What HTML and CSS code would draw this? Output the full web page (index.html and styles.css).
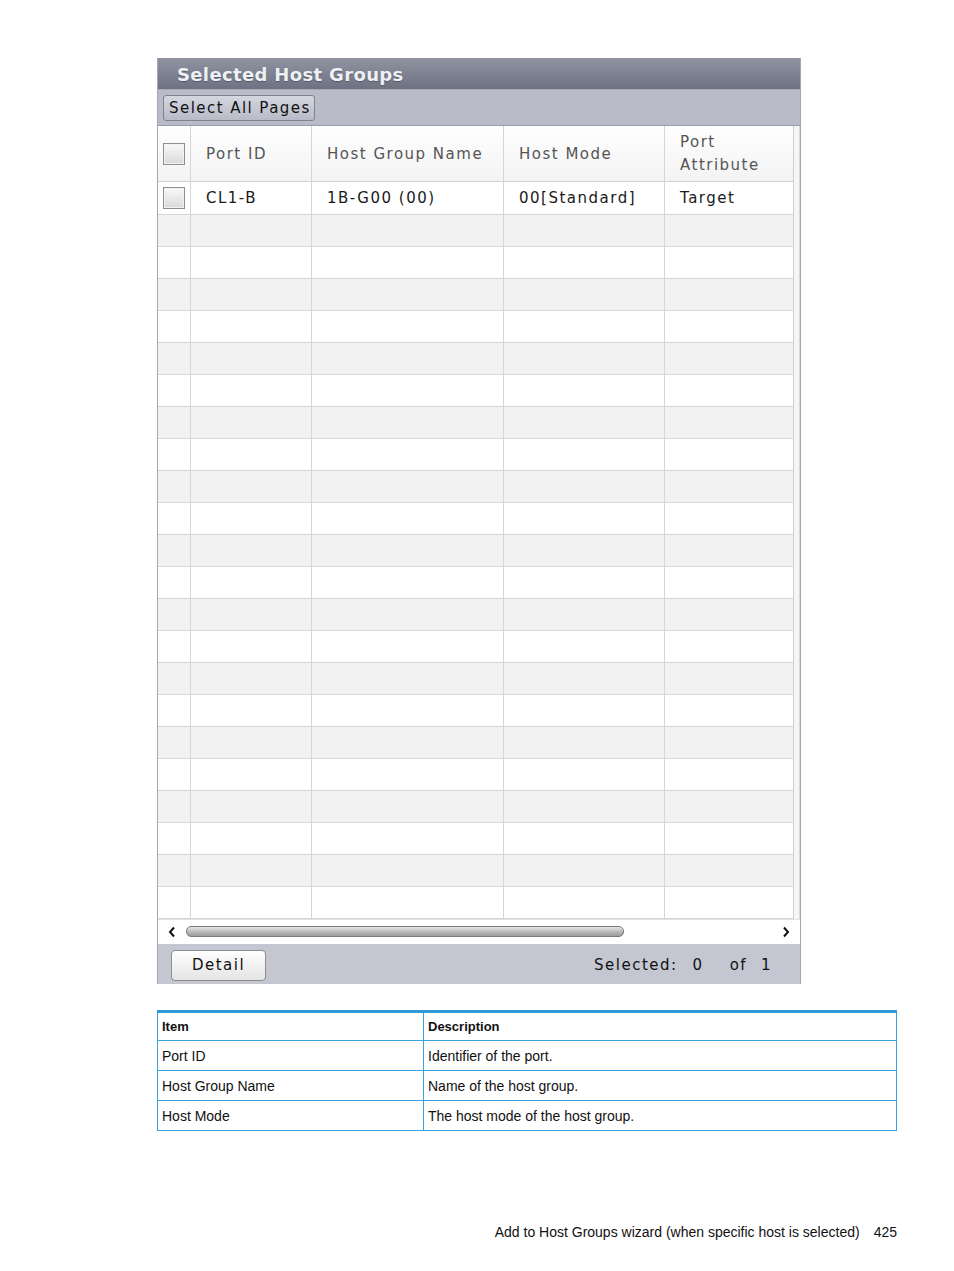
FILE: index.html
```html
<!DOCTYPE html>
<html>
<head>
<meta charset="utf-8">
<link rel="stylesheet" href="styles.css">
</head>
<body>
<div class="page">
  <div class="panel">
    <div class="titlebar">Selected Host Groups</div>
    <div class="toolbar"><button class="tbtn">Select All Pages</button></div>
    <div class="gridwrap">
      <div class="grid">
        <div class="row head">
          <div class="cell cbcell"><span class="cb"></span></div>
          <div class="cell">Port ID</div>
          <div class="cell">Host Group Name</div>
          <div class="cell">Host Mode</div>
          <div class="cell wrap">Port<br>Attribute</div>
        </div>
        <div class="row data">
          <div class="cell cbcell"><span class="cb"></span></div>
          <div class="cell">CL1-B</div>
          <div class="cell">1B-G00 (00)</div>
          <div class="cell">00[Standard]</div>
          <div class="cell">Target</div>
        </div>
        <div class="row alt"><div class="cell"></div><div class="cell"></div><div class="cell"></div><div class="cell"></div><div class="cell"></div></div>
        <div class="row"><div class="cell"></div><div class="cell"></div><div class="cell"></div><div class="cell"></div><div class="cell"></div></div>
        <div class="row alt"><div class="cell"></div><div class="cell"></div><div class="cell"></div><div class="cell"></div><div class="cell"></div></div>
        <div class="row"><div class="cell"></div><div class="cell"></div><div class="cell"></div><div class="cell"></div><div class="cell"></div></div>
        <div class="row alt"><div class="cell"></div><div class="cell"></div><div class="cell"></div><div class="cell"></div><div class="cell"></div></div>
        <div class="row"><div class="cell"></div><div class="cell"></div><div class="cell"></div><div class="cell"></div><div class="cell"></div></div>
        <div class="row alt"><div class="cell"></div><div class="cell"></div><div class="cell"></div><div class="cell"></div><div class="cell"></div></div>
        <div class="row"><div class="cell"></div><div class="cell"></div><div class="cell"></div><div class="cell"></div><div class="cell"></div></div>
        <div class="row alt"><div class="cell"></div><div class="cell"></div><div class="cell"></div><div class="cell"></div><div class="cell"></div></div>
        <div class="row"><div class="cell"></div><div class="cell"></div><div class="cell"></div><div class="cell"></div><div class="cell"></div></div>
        <div class="row alt"><div class="cell"></div><div class="cell"></div><div class="cell"></div><div class="cell"></div><div class="cell"></div></div>
        <div class="row"><div class="cell"></div><div class="cell"></div><div class="cell"></div><div class="cell"></div><div class="cell"></div></div>
        <div class="row alt"><div class="cell"></div><div class="cell"></div><div class="cell"></div><div class="cell"></div><div class="cell"></div></div>
        <div class="row"><div class="cell"></div><div class="cell"></div><div class="cell"></div><div class="cell"></div><div class="cell"></div></div>
        <div class="row alt"><div class="cell"></div><div class="cell"></div><div class="cell"></div><div class="cell"></div><div class="cell"></div></div>
        <div class="row"><div class="cell"></div><div class="cell"></div><div class="cell"></div><div class="cell"></div><div class="cell"></div></div>
        <div class="row alt"><div class="cell"></div><div class="cell"></div><div class="cell"></div><div class="cell"></div><div class="cell"></div></div>
        <div class="row"><div class="cell"></div><div class="cell"></div><div class="cell"></div><div class="cell"></div><div class="cell"></div></div>
        <div class="row alt"><div class="cell"></div><div class="cell"></div><div class="cell"></div><div class="cell"></div><div class="cell"></div></div>
        <div class="row"><div class="cell"></div><div class="cell"></div><div class="cell"></div><div class="cell"></div><div class="cell"></div></div>
        <div class="row alt"><div class="cell"></div><div class="cell"></div><div class="cell"></div><div class="cell"></div><div class="cell"></div></div>
        <div class="row"><div class="cell"></div><div class="cell"></div><div class="cell"></div><div class="cell"></div><div class="cell"></div></div>
      </div>
      <div class="gutter"></div>
    </div>
    <div class="hscroll">
      <svg class="arrow" width="8" height="12" viewBox="0 0 8 12"><path d="M6 1.5 L2 6 L6 10.5" fill="none" stroke="#111" stroke-width="2"/></svg>
      <div class="track"><div class="thumb"></div></div>
      <svg class="arrow" width="8" height="12" viewBox="0 0 8 12"><path d="M2 1.5 L6 6 L2 10.5" fill="none" stroke="#111" stroke-width="2"/></svg>
    </div>
    <div class="footer">
      <button class="dbtn">Detail</button>
      <div class="count"><span>Selected:</span><span class="n0">0</span><span class="of">of</span><span class="n1">1</span></div>
    </div>
  </div>

  <table class="desc">
    <tr><th class="c1">Item</th><th>Description</th></tr>
    <tr><td class="c1">Port ID</td><td>Identifier of the port.</td></tr>
    <tr><td class="c1">Host Group Name</td><td>Name of the host group.</td></tr>
    <tr><td class="c1">Host Mode</td><td>The host mode of the host group.</td></tr>
  </table>

  <div class="pagefoot"><span>Add to Host Groups wizard (when specific host is selected)</span><span class="pno">425</span></div>
</div>
</body>
</html>
```

FILE: styles.css
```css
* { box-sizing: border-box; }
body { margin: 0; background: #fff; }
.page { padding: 58px 0 0 157px; width: 954px; }

.panel {
  width: 644px;
  border-left: 1px solid #a4a7b1;
  border-right: 1px solid #a4a7b1;
  font-family: "DejaVu Sans", sans-serif;
  font-size: 15px;
  letter-spacing: 1.5px;
}
.titlebar {
  height: 31px;
  background: linear-gradient(#9094a2, #6d7181);
  color: #eef0f4;
  font-weight: bold;
  font-size: 18px;
  letter-spacing: 0.35px;
  line-height: 33px;
  padding-left: 19px;
  text-shadow: 0 1px 1px #555a68;
}
.toolbar {
  height: 37px;
  background: #b9bcc8;
  border-top: 1px solid #a8abb7;
  border-bottom: 1px solid #9a9da8;
  padding: 5px 0 0 5px;
}
.tbtn {
  height: 26px;
  padding: 0 3px 0 5px;
  font-family: "DejaVu Sans", sans-serif;
  font-size: 15px;
  letter-spacing: 1.45px;
  color: #111;
  background: linear-gradient(#d4d7e0, #b8bbc7);
  border: 1px solid #80838f;
  border-radius: 3px;
  line-height: 22px;
}

.gridwrap { display: flex; background: #fff; }
.grid { width: 635px; }
.gutter {
  width: 7px;
  border-left: 1px solid #cfcfcf;
  border-right: 1px solid #d8d8d8;
  background: #f6f6f6;
}
.row {
  display: grid;
  grid-template-columns: 33px 121px 192px 161px 128px;
  height: 32px;
  border-bottom: 1px solid #d6d6d6;
  background: #fff;
}
.row.alt { background: #f2f2f2; }
.row.head {
  height: 56px;
  background: linear-gradient(#ffffff, #f3f3f3);
  color: #555;
  border-bottom: 1px solid #d2d2d2;
}
.row.data { height: 33px; color: #1a1a1a; }
.cell {
  border-right: 1px solid #d6d6d6;
  padding-left: 15px;
  display: flex;
  align-items: center;
  white-space: nowrap;
}
.cell:last-child { border-right: 0; }
.cell.wrap { line-height: 23px; padding-top: 1px; }
.cbcell { padding-left: 0; justify-content: center; }
.cb {
  width: 22px;
  height: 22px;
  border: 1px solid #8f8f8f;
  background: linear-gradient(#fafafa, #d9d9d9);
  box-shadow: inset 0 0 0 1px #f2f2f2;
}

.hscroll {
  height: 25px;
  background: #fff;
  border-top: 1px solid #e2e2e2;
  display: flex;
  align-items: center;
  padding: 0 10px 0 10px;
}
.track { flex: 1; margin: 0 6px 0 10px; height: 12px; }
.thumb {
  width: 438px;
  height: 11px;
  border: 1px solid #7b7b7b;
  border-radius: 5px;
  background: linear-gradient(#e6e6e6, #b4b4b4 60%, #9c9c9c);
}
.footer {
  height: 40px;
  background: #c4c7d2;
  display: flex;
  align-items: center;
  padding-left: 13px;
}
.dbtn {
  width: 95px;
  height: 31px;
  font-family: "DejaVu Sans", sans-serif;
  font-size: 15px;
  letter-spacing: 1.5px;
  color: #111;
  background: linear-gradient(#ffffff, #e4e4e4);
  border: 1px solid #8e8e8e;
  border-radius: 4px;
  margin-top: 2px;
}
.count { margin-left: 328px; display: flex; color: #111; margin-top: 2px; }
.n0 { margin-left: 15px; }
.of { margin-left: 26px; }
.n1 { margin-left: 14px; }

.desc {
  margin-top: 26px;
  width: 740px;
  border-collapse: collapse;
  font-family: "Liberation Sans", Arial, sans-serif;
  font-size: 14px;
  color: #111;
  border-top: 3px solid #2e9bd7;
}
.desc th, .desc td {
  border: 1px solid #3aa3dc;
  text-align: left;
  padding: 0 0 0 4px;
  height: 30px;
  font-weight: normal;
}
.desc th { font-weight: bold; font-size: 13px; height: 29px; }
.desc .c1 { width: 266px; }

.pagefoot {
  margin-top: 93px;
  width: 740px;
  display: flex;
  justify-content: flex-end;
  font-family: "Liberation Sans", Arial, sans-serif;
  font-size: 14px;
  color: #111;
}
.pno { margin-left: 14px; }
```
